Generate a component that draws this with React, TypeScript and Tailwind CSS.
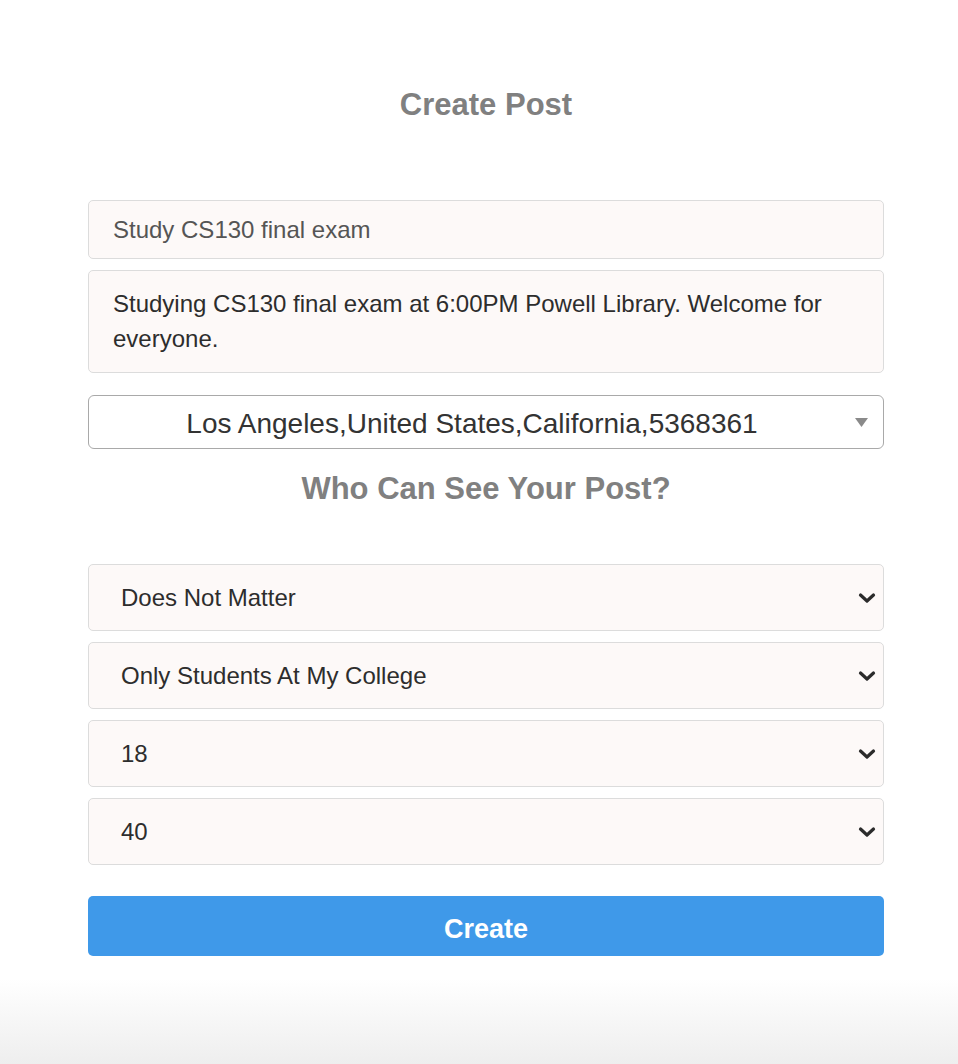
import React from "react";

const Chevron = () => (
  <svg
    className="pointer-events-none absolute right-[8px] top-1/2 -translate-y-1/2"
    width="18"
    height="12"
    viewBox="0 0 18 12"
  >
    <path d="M2.5 3 L9 9 L15.5 3" fill="none" stroke="#2b2b2b" strokeWidth="3.2" strokeLinecap="round" strokeLinejoin="round" />
  </svg>
);

const Picker = ({ value }: { value: string }) => (
  <div className="relative">
    <select
      defaultValue={value}
      className="block h-[67px] w-full appearance-none rounded-[5px] border border-[#dcdcdc] bg-[#fdf9f8] pl-8 text-[24px] text-[#2d2d2d] outline-none"
    >
      <option>{value}</option>
    </select>
    <Chevron />
  </div>
);

const App = () => {
  return (
    <div
      className="min-h-[1064px] bg-gradient-to-b from-white from-[92%] to-[#eeeeee]"
      style={{ fontFamily: '"Liberation Sans", Arial, sans-serif' }}
    >
      <div className="ml-[88px] w-[796px] pt-[87px]">
        <h1 className="text-center text-[31px] font-bold leading-[36px] text-[#808080]">Create Post</h1>

        <form className="mt-[77px] flex flex-col">
          <input
            defaultValue="Study CS130 final exam"
            className="h-[59px] w-full rounded-[5px] border border-[#dcdcdc] bg-[#fdf9f8] px-6 text-[24px] text-[#555] outline-none"
          />
          <textarea
            rows={2}
            defaultValue="Studying CS130 final exam at 6:00PM Powell Library. Welcome for everyone."
            className="mt-[11px] h-[103px] w-full resize-none rounded-[5px] border border-[#dcdcdc] bg-[#fdf9f8] px-6 pt-[15px] text-[24px] leading-[35px] text-[#2d2d2d] outline-none"
          />

          <div className="relative mt-[22px]">
            <div className="flex h-[54px] w-full items-center justify-center rounded-[6px] border border-[#a9a9a9] bg-white pr-[28px] pt-[4px] text-[28px] text-[#333]">
              Los Angeles,United States,California,5368361
            </div>
            <svg
              className="pointer-events-none absolute right-[16px] top-1/2 -translate-y-1/2"
              width="13"
              height="10"
              viewBox="0 0 13 10"
            >
              <path d="M0 1 L13 1 L6.5 10 Z" fill="#8a8a8a" />
            </svg>
          </div>

          <h2 className="mt-[21px] text-center text-[31px] font-bold leading-[38px] text-[#808080]">Who Can See Your Post?</h2>

          <div className="mt-[56px] flex flex-col gap-[11px]">
            <Picker value="Does Not Matter" />
            <Picker value="Only Students At My College" />
            <Picker value="18" />
            <Picker value="40" />
          </div>

          <button
            type="button"
            className="mt-[31px] h-[60px] w-full rounded-[5px] bg-[#3f99e9] pt-[6px] text-[27px] font-bold text-white"
          >
            Create
          </button>
        </form>
      </div>
    </div>
  );
};

export default App;
